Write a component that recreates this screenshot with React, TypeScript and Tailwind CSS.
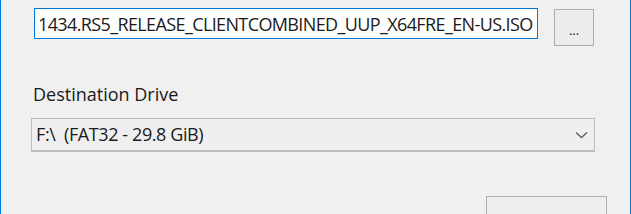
import React from 'react';

const font = { fontFamily: '"Segoe UI", "Open Sans", "Noto Sans", sans-serif' };

function Chevron() {
  return (
    <svg width="13" height="8" viewBox="0 0 13 8" fill="none">
      <path d="M1 1.5l5.5 5 5.5-5" stroke="#606060" strokeWidth="1.4" />
    </svg>
  );
}

export default function App() {
  return (
    <div
      className="w-[631px] h-[214px] overflow-hidden bg-[#f0f0f0] border-l border-r border-[#0078d7] text-[#1a1a1a] text-[18px]"
      style={font}
    >
      <div className="flex items-start pt-2 pl-[33px]">
        <div className="w-[504px] h-[31px] bg-white border border-[#0078d7] flex items-center px-[3px] overflow-hidden whitespace-nowrap leading-none tracking-[-0.62px]">
          1434.RS5_RELEASE_CLIENTCOMBINED_UUP_X64FRE_EN-US.ISO
        </div>
        <button className="ml-4 mt-px w-10 h-[37px] bg-[#ececec] border border-[#adadad] flex items-center justify-center text-[13px] leading-none pt-[6px]">
          ...
        </button>
      </div>

      <div className="pl-[32px] mt-[36px] leading-6">Destination Drive</div>

      <div className="ml-[30px] mt-[12px] w-[564px] h-[34px] bg-[#efefef] border border-[#bcbcbc] border-b-2 flex items-center justify-between pl-[4px] pr-[6px]">
        <span className="whitespace-pre tracking-[-0.4px]">F:\  (FAT32 - 29.8 GiB)</span>
        <Chevron />
      </div>

      <div className="flex justify-end pr-[23px] mt-[44px]">
        <button className="w-[121px] h-[34px] bg-[#efefef] border border-[#adadad]" />
      </div>
    </div>
  );
}
